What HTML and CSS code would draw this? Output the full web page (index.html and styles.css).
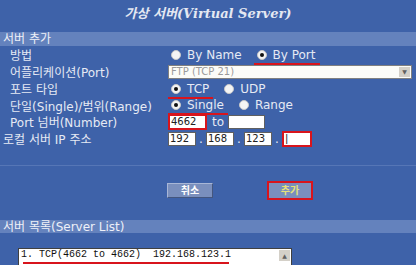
FILE: index.html
```html
<!DOCTYPE html>
<html>
	<head>
		<title>가상 서버</title>
		<meta http-equiv="Content-Type" content="text/html; charset=UTF-8">
		<link rel="stylesheet" href="styles.css">
	</head>
	<body>
		<div class="title">가상 서버(Virtual Server)</div>

		<div class="bar">서버 추가</div>
		<div class="form">
			<div class="row">
				<div class="label">방법</div>
				<div class="ctrl">
					<span class="opt"><span class="radio"></span>By Name</span>
					<span class="opt mark"><span class="radio on"></span>By Port</span>
				</div>
			</div>
			<div class="row">
				<div class="label">어플리케이션(Port)</div>
				<div class="ctrl">
					<div class="select"><span class="seltext">FTP (TCP 21)</span><span class="drop">&#9660;</span></div>
				</div>
			</div>
			<div class="row">
				<div class="label">포트 타입</div>
				<div class="ctrl">
					<span class="opt mark"><span class="radio on"></span>TCP</span>
					<span class="opt"><span class="radio"></span>UDP</span>
				</div>
			</div>
			<div class="row">
				<div class="label">단일(Single)/범위(Range)</div>
				<div class="ctrl">
					<span class="opt mark"><span class="radio on"></span>Single</span>
					<span class="opt"><span class="radio"></span>Range</span>
				</div>
			</div>
			<div class="row">
				<div class="label">Port 넘버(Number)</div>
				<div class="ctrl">
					<input class="box port red" type="text" value="4662">
					<span class="to">to</span>
					<input class="box port" type="text" value="">
				</div>
			</div>
			<div class="row">
				<div class="label ip">로컬 서버 IP 주소</div>
				<div class="ctrl">
					<input class="box oct" type="text" value="192"><span class="dot">.</span>
					<input class="box oct" type="text" value="168"><span class="dot">.</span>
					<input class="box oct" type="text" value="123"><span class="dot">.</span>
					<input class="box oct red" type="text" value="|">
				</div>
			</div>
		</div>

		<div class="rule"></div>

		<div class="buttons">
			<button class="btn">취소</button>
			<button class="btn add">추가</button>
		</div>

		<div class="bar list-bar">서버 목록(Server List)</div>
		<div class="list">
			<div class="listbox">
				<span class="entry">1. TCP(4662 to 4662)  192.168.123.1</span>
				<span class="scroll">&#9650;</span>
			</div>
		</div>
	</body>
</html>
```

FILE: styles.css
```css
html {
	overflow: hidden;
}

body {
	margin: 0;
	height: 265px;
	background-color: #3e62a9;
	font-family: "DejaVu Sans", "Noto Sans CJK KR", sans-serif;
	font-size: 12px;
	color: #e6eaf4;
	overflow: hidden;
}

.title {
	height: 32px;
	line-height: 28px;
	text-align: center;
	font-style: italic;
	font-weight: bold;
	font-size: 13px;
	font-family: "DejaVu Serif", "Noto Sans CJK KR", serif;
	color: #e4e8f2;
}

.bar {
	height: 14px;
	line-height: 14px;
	background-color: #6482bd;
	padding-left: 3px;
	color: #eef0f8;
	font-size: 12px;
}

.row {
	display: flex;
	align-items: center;
	height: 17px;
}

.row:nth-child(4) {
	height: 16px;
}

.label {
	width: 158px;
	padding-left: 10px;
	white-space: nowrap;
}

.label.ip {
	padding-left: 3px;
	width: 165px;
}

.ctrl {
	display: flex;
	align-items: center;
}

.opt {
	display: inline-flex;
	align-items: center;
	margin-left: 3px;
	margin-right: 12px;
	position: relative;
}

.mark::after {
	content: "";
	position: absolute;
	left: -3px;
	right: -4px;
	bottom: -3px;
	height: 2px;
	background-color: #d8141c;
}

.radio {
	display: inline-block;
	width: 8px;
	height: 8px;
	border-radius: 50%;
	background-color: #f4f4f4;
	border: 1px solid #c8c8c8;
	margin-right: 6px;
	position: relative;
}

.radio.on::before {
	content: "";
	position: absolute;
	left: 2px;
	top: 2px;
	width: 4px;
	height: 4px;
	border-radius: 50%;
	background-color: #101010;
}

.select {
	width: 242px;
	height: 12px;
	background-color: #fcfcf8;
	border: 1px solid #808080;
	display: flex;
	align-items: center;
	justify-content: space-between;
}

.seltext {
	font-size: 10px;
	color: #9a9a9a;
	padding-left: 2px;
}

.drop {
	width: 11px;
	height: 10px;
	margin-right: 1px;
	background-color: #d4d0c8;
	color: #606060;
	font-size: 6px;
	line-height: 10px;
	text-align: center;
}

.box {
	height: 12px;
	padding: 0 1px;
	margin: 0;
	border: 1px solid #606060;
	background-color: #ffffff;
	font-family: "DejaVu Sans", sans-serif;
	font-size: 10px;
	color: #202020;
	box-sizing: content-box;
}

.port {
	width: 33px;
}

.oct {
	width: 24px;
}

.box.red {
	border: 2px solid #d8141c;
}

.to {
	margin: 0 4px 0 5px;
}

.dot {
	width: 10px;
	text-align: center;
}

.rule {
	margin-top: 18px;
	height: 1px;
	background-color: #5676b6;
}

.buttons {
	display: flex;
	height: 36px;
	align-items: center;
	padding-left: 167px;
	padding-top: 6px;
}

button {
	cursor: pointer;
}

.btn {
	width: 46px;
	height: 15px;
	padding: 0;
	border: 1px solid #a8b6d6;
	border-right-color: #44567e;
	border-bottom-color: #44567e;
	background-color: #7a8fbd;
	color: #ffffff;
	font-family: "DejaVu Sans", "Noto Sans CJK KR", sans-serif;
	font-weight: bold;
	font-size: 10px;
	line-height: 13px;
}

.btn.add {
	margin-left: 54px;
	height: 19px;
	border: 2px solid #d8141c;
	color: #e6e27a;
}

.list-bar {
	margin-top: 12px;
	height: 13px;
}

.list {
	padding: 15px 0 0 18px;
}

.listbox {
	width: 272px;
	height: 17px;
	background-color: #ffffff;
	border: 1px solid #404040;
	border-bottom: none;
	display: flex;
	justify-content: space-between;
	align-items: flex-start;
}

.entry {
	position: relative;
	font-family: "Liberation Mono", monospace;
	font-size: 10px;
	color: #101010;
	white-space: pre;
	padding-left: 2px;
	line-height: 11px;
}

.entry::after {
	content: "";
	position: absolute;
	left: 4px;
	right: 2px;
	top: 13px;
	height: 2px;
	background-color: #d8141c;
}

.scroll {
	width: 11px;
	height: 11px;
	margin: 1px;
	background-color: #d4d0c8;
	color: #606060;
	font-size: 6px;
	line-height: 11px;
	text-align: center;
}
```
